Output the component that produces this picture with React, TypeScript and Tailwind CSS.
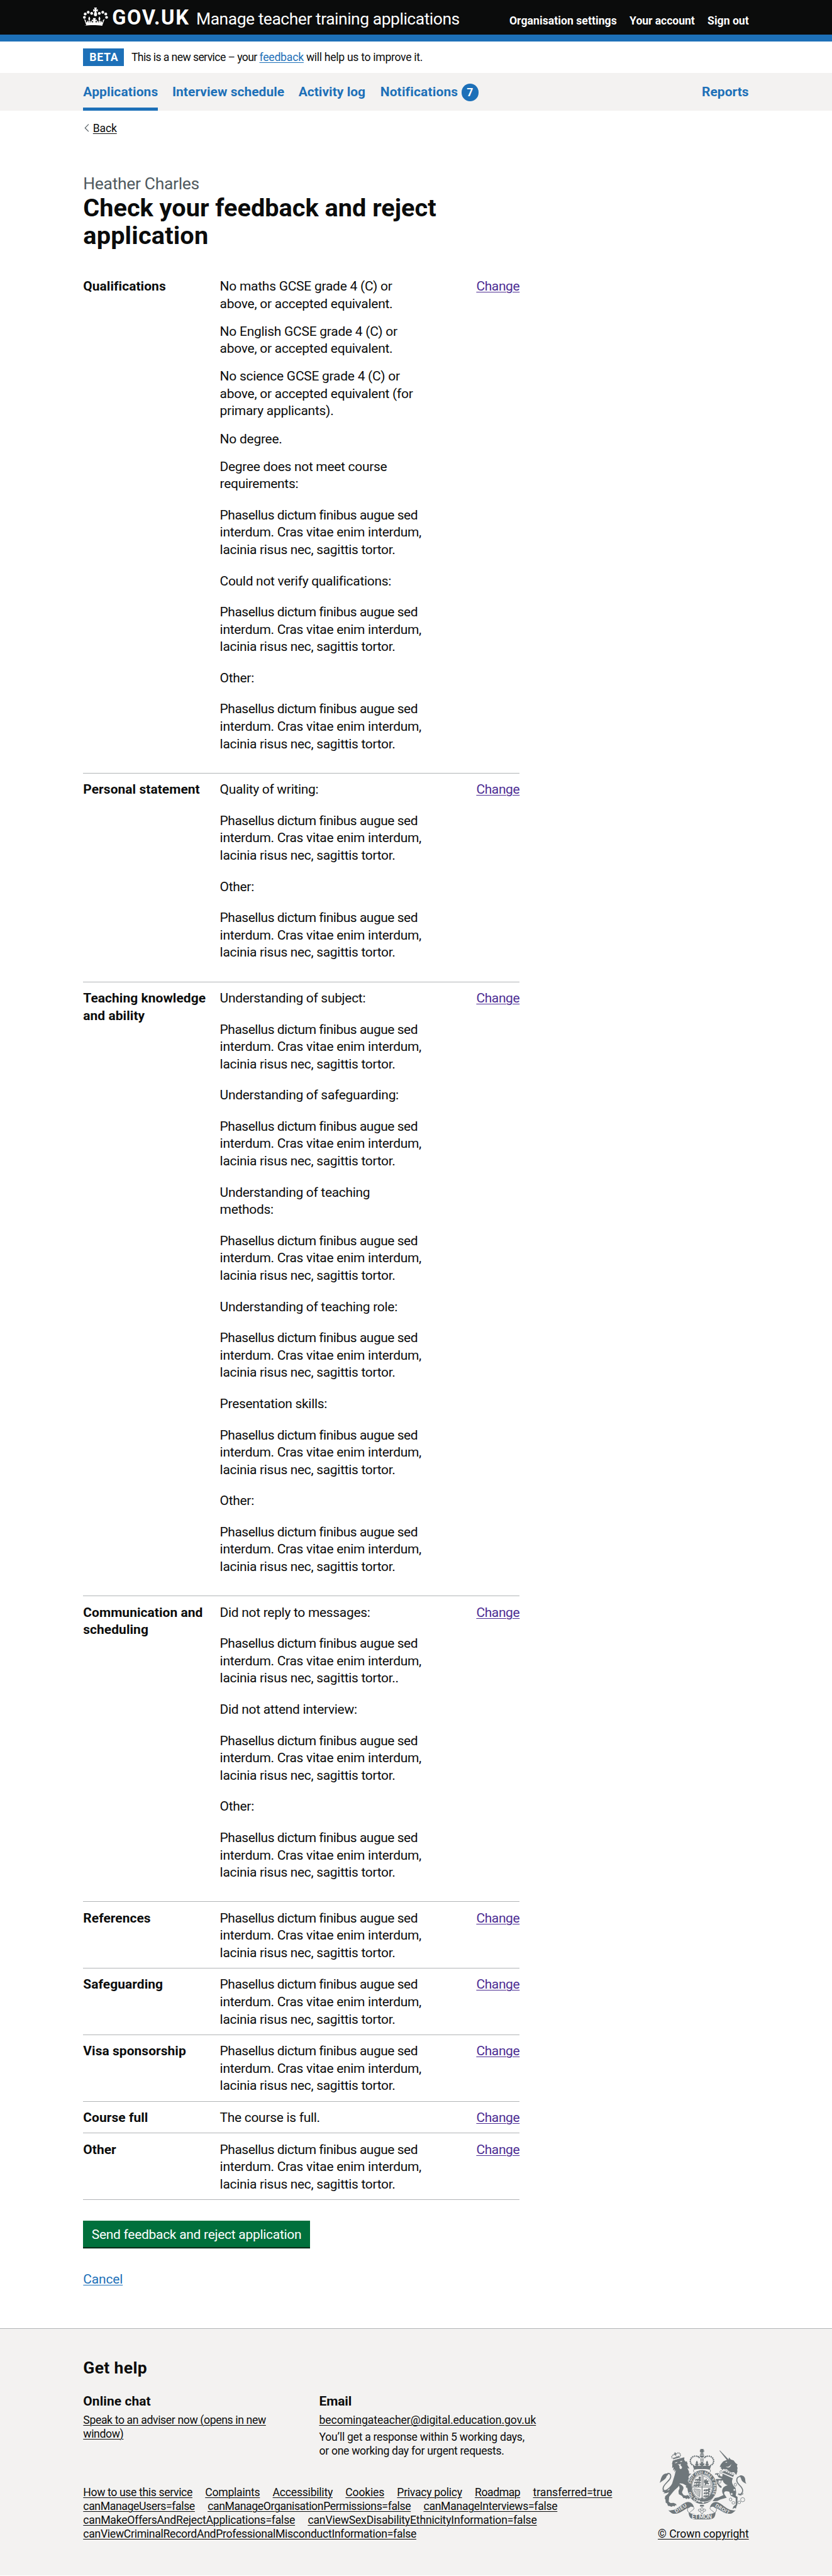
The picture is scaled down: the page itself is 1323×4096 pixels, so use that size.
import type { ReactNode } from "react";

type TextLine = [text: string, tracking: string];
type Block = { lines: TextLine[]; spacing: string };
type Row = { title: string[]; blocks: Block[] };

const REG = "tracking-[-0.0135em]";

const item = (...lines: string[]): Block => ({
  lines: lines.map((l): TextLine => [l, "tracking-[-0.0112em]"]),
  spacing: "mb-[16.5375px]",
});
const label = (...lines: string[]): Block => ({
  lines: lines.map((l): TextLine => [l, REG]),
  spacing: "mb-[22.05px]",
});
const lorem = (spacing = "mb-[22.05px]", end = "."): Block => ({
  lines: [
    ["Phasellus dictum finibus augue sed", "tracking-[-0.0221em]"],
    ["interdum. Cras vitae enim interdum,", "tracking-[-0.0133em]"],
    ["lacinia risus nec, sagittis tortor" + end, "tracking-[-0.014em]"],
  ],
  spacing,
});
const single = (): Block => lorem("mb-0");

const rows: Row[] = [
  {
    title: ["Qualifications"],
    blocks: [
      item("No maths GCSE grade 4 (C) or", "above, or accepted equivalent."),
      item("No English GCSE grade 4 (C) or", "above, or accepted equivalent."),
      item("No science GCSE grade 4 (C) or", "above, or accepted equivalent (for", "primary applicants)."),
      item("No degree."),
      label("Degree does not meet course", "requirements:"),
      lorem(),
      label("Could not verify qualifications:"),
      lorem(),
      label("Other:"),
      lorem(),
    ],
  },
  {
    title: ["Personal statement"],
    blocks: [label("Quality of writing:"), lorem(), label("Other:"), lorem()],
  },
  {
    title: ["Teaching knowledge", "and ability"],
    blocks: [
      label("Understanding of subject:"),
      lorem(),
      label("Understanding of safeguarding:"),
      lorem(),
      label("Understanding of teaching", "methods:"),
      lorem(),
      label("Understanding of teaching role:"),
      lorem(),
      label("Presentation skills:"),
      lorem(),
      label("Other:"),
      lorem(),
    ],
  },
  {
    title: ["Communication and", "scheduling"],
    blocks: [
      label("Did not reply to messages:"),
      lorem("mb-[22.05px]", ".."),
      label("Did not attend interview:"),
      lorem(),
      label("Other:"),
      lorem(),
    ],
  },
  { title: ["References"], blocks: [single()] },
  { title: ["Safeguarding"], blocks: [single()] },
  { title: ["Visa sponsorship"], blocks: [single()] },
  { title: ["Course full"], blocks: [{ lines: [["The course is full.", REG]], spacing: "mb-0" }] },
  { title: ["Other"], blocks: [single()] },
];

const footerLinks: TextLine[][] = [
  [
    ["How to use this service", "tracking-[-0.0206em]"],
    ["Complaints", "tracking-[-0.0144em]"],
    ["Accessibility", "tracking-[-0.0142em]"],
    ["Cookies", "tracking-[-0.0121em]"],
    ["Privacy policy", "tracking-[-0.0163em]"],
    ["Roadmap", "tracking-[-0.0256em]"],
    ["transferred=true", "tracking-[-0.0023em]"],
  ],
  [
    ["canManageUsers=false", "tracking-[-0.0216em]"],
    ["canManageOrganisationPermissions=false", "tracking-[-0.0217em]"],
    ["canManageInterviews=false", "tracking-[-0.0174em]"],
  ],
  [
    ["canMakeOffersAndRejectApplications=false", "tracking-[-0.0128em]"],
    ["canViewSexDisabilityEthnicityInformation=false", "tracking-[-0.0114em]"],
  ],
  [["canViewCriminalRecordAndProfessionalMisconductInformation=false", "tracking-[-0.017em]"]],
];

const UNDERLINE = "underline decoration-[1.1px] underline-offset-[1.5px]";

function Container({ children, className = "" }: { children: ReactNode; className?: string }) {
  return <div className={`mx-auto w-[1058.4px] ${className}`}>{children}</div>;
}

function CrownIcon() {
  return (
    <svg viewBox="0 0 216 159" className="h-[29.2px] w-[39.7px] shrink-0" fill="white" aria-hidden="true">
      <circle cx="12" cy="85" r="12" />
      <circle cx="19" cy="56" r="12" />
      <circle cx="45" cy="41" r="12" />
      <circle cx="75" cy="50" r="12" />
      <circle cx="141" cy="50" r="12" />
      <circle cx="171" cy="41" r="12" />
      <circle cx="197" cy="56" r="12" />
      <circle cx="204" cy="85" r="12" />
      <path d="M96 0h24l-6 19 14-5v21l-14-5c1 9 8 20 8 31 0 9-6 14-14 14s-14-5-14-14c0-11 7-22 8-31l-14 5V14l14 5z" />
      <path d="M30 158 9 100l15 9 2 20c8-1 14-9 10-14 10-3 12 8 8 13h6c-2-10-1-15 3-16-8-10-11-17 1-36 12 19 9 26 1 36 4 1 5 6 3 16h8c-5-6-1-15 8-13-4 8 3 15 14 13l0-12-11 5v-18l13 5-5-17h26l-5 17 13-5v18l-11-5v12c11 2 18-5 14-13 9-2 13 7 8 13h8c-2-10-1-15 3-16-8-10-11-17 1-36 12 19 9 26 1 36 4 1 5 6 3 16h6c-4-5-2-16 8-13-4 5 2 13 10 14l2-20 15-9-21 58c-48-7-108-7-156 0z" />
    </svg>
  );
}

function RibbonHalf() {
  return (
    <g>
      <path d="M206 608c28 5 54-2 79-18 35-24 62-52 93-53 26 0 47 22 52 52-12-16-34-15-40-4-36 3-80 56-130 54-22 0-36-15-54-31z" />
      <path d="M392 578c-28 12-24 38-4 52M430 588c-2 20-28 24-40 44" fill="none" stroke="#6f777b" strokeWidth="5" />
    </g>
  );
}

function CrownHalf() {
  const beads = [
    [474, 152], [466, 144], [452, 140], [434, 140], [418, 146], [406, 157], [399, 170], [397, 185], [401, 200], [409, 212],
  ];
  return (
    <g>
      {beads.map(([x, y]) => (
        <circle key={`${x}-${y}`} cx={x} cy={y} r="6.5" />
      ))}
      <path d="M454 178c12 16 10 22 3 30 8-3 13-2 13 4-4 0-6 4-4 12h-24c2-8 0-12-4-12 0-6 5-7 13-4-7-8-9-14 3-30z" />
      <path d="M414 208l12 8 6 8h66v28c-30-2-52 0-68 4z" />
      <path d="M498 249c-34-1-58 2-70 8-6 8-4 17 4 24" fill="none" stroke="#6f777b" strokeWidth="5" />
    </g>
  );
}

function Beast({ x, y }: { x: number; y: number }) {
  return (
    <path
      transform={`translate(${x} ${y})`}
      d="M0 12l8-8 6 4 8-4 14 2 6-8 6 2-3 9 5 4-3 12h-6l-2-7-12 1-4 7h-6l2-8-6-2-6 6-6-2z"
    />
  );
}

const lionCrownBeads = [
  [238, 154], [237, 142], [245, 132], [256, 127], [277, 120], [288, 113], [300, 113], [309, 121], [312, 133],
];

function RoyalArms() {
  return (
    <svg viewBox="132 78 750 612" className="h-[112.5px] w-[137.8px]" fill="#6f777b" aria-hidden="true">
      {/* lion */}
      <path d="M237 213l8-33 20-8 72-20 9 0 -2 20 12 16 10-4 10 28-9-4 15 26 8 14-18-4 14 30 0 18c6 0 14-2 20 0l-16 14-10 16 18 32 12 32 2 30-10 14 -12-4-4 8-8-14-10 4-2-18-12-4 10-6-28-16c-12-4-26-6-34-2 20 12 34 20 36 34 0 22-14 28-12 46l14 20 22 4 6-6 14 4 12 10 4 18-8-4-8 8-8-8-12 8-10-10-14 2-14-20-26-14-4-28 10-22-4-24c-10 14-32 30-50 50l-36 46-4 42 16 12 26-2 22 10 4 14-10-4-8 12-12-6-14 8-16-6-14-2-8-20-12-8-2-26-6-8 4-22 26-22 12-46 22-42 22-72 10-44-14 18 4-26-14 14 4-32-12 10 2-38z" />
      <path d="M262 198l24-8c-2 10-16 14-24 8zM306 186l22-6c-2 10-14 14-22 6zM284 208c10 6 24 4 32-2l-4 14 12 12c4 10-2 20-10 20s-14-10-10-20l-4-12z" fill="#f3f2f1" />
      <path d="M248 168l62-18 0-12-8 8-6-12-6 12-12-8-2 14-8-8-4 12-10-8-2 12-10-4z" />
      {lionCrownBeads.map(([x, y]) => (
        <circle key={`${x}-${y}`} cx={x} cy={y} r="4.6" />
      ))}
      <path d="M260 108h9l2 7 8-1 1 8-8 1 3 12-8 2-4-12-7 2-2-8 7-2z" />
      <path d="M238 176l76-22" stroke="#f3f2f1" strokeWidth="4" />
      <path d="M198 290c32-6 40 28 14 58-24 28-62 58-48 84 16 20 52-12 72-38" fill="none" stroke="#6f777b" strokeWidth="9" />
      <path d="M132 372c12-30 14-78 54-82 24-2 26 10 6 22-2 24-24 32-60 60zM148 430c28 12 54 14 82-6-8 24-32 42-66 37l12-8-22-6 10-6z" />
      <path d="M286 420c14 24 10 50-4 66-6-22-10-46 4-66z" fill="#f3f2f1" />

      {/* unicorn */}
      <path d="M648 92l6 0 72 74-12 8zM662 210l20-24 22-10 24-8 4-17 16 18 24 8 16 22 18 14-6 12 6 18-3 16 2 14-10 30-20-24-26 0-22-12-14-14c-10 2-20 0-30-2l-8 10-8-12-8-6 8-8-16-2z" />
      <path d="M704 232c20 4 38-6 46-24-2 24-22 40-46 24zM700 194c6-6 12-6 18-2l-10 6z" fill="#f3f2f1" />
      <path d="M690 254l92 44-10 26-92-38z" fill="#f3f2f1" />
      <path d="M688 264l8 10 6-8 6 16 10-12 6 20 12-12 4 20 14-10 0 16 16-6 4 4-6 20-92-38z" />
      <path d="M690 254l92 44" stroke="#6f777b" strokeWidth="3" />
      <path d="M682 286l92 40" stroke="#f3f2f1" strokeWidth="4" />
      <path d="M676 292l90 40c-18 30-4 58 22 82l6 38-4 30 16 12-2 64-8 18-4 18-12-6-18 10 8-22 20-16 0-56-44-22-12-34c-26-8-52-4-42 22l20 30-54 14-26 14-28 2-14 0 20-28 32-6 42-20c-20-30-14-66 22-80l14-4c-26-10-40-26-42-44l-22 8-18-6-4 18 18 22 16 12-2 14-14-6-10-12-16-24-6-24-12-2 14-10 30 0 22-4-32-10-16-26-16 2 2-10 24-2 24 26 14 2z" />
      <path d="M832 470c36-28 12-58-12-82-32-32-26-70 10-72" fill="none" stroke="#6f777b" strokeWidth="9" />
      <path d="M882 378c-18-4-44-24-44-40-12-20-6-30-20-30 32-8 52 8 54 32 2 16 0 22 10 38zM858 456c-10 14-34 16-48 2l6 12-10 0c12 8 20 10 34 10l-2-8 14 0z" />
      <g fill="#f3f2f1" stroke="#6f777b" strokeWidth="4.5">
        <ellipse cx="663" cy="277" rx="10" ry="12" />
        <ellipse cx="643" cy="301" rx="8" ry="10" />
        <ellipse cx="652" cy="360" rx="11" ry="14" />
        <ellipse cx="787" cy="387" rx="10" ry="13" />
        <circle cx="778" cy="432" r="10" />
        <circle cx="755" cy="468" r="10" />
        <ellipse cx="746" cy="515" rx="11" ry="13" />
        <ellipse cx="770" cy="544" rx="13" ry="11" />
        <ellipse cx="820" cy="540" rx="13" ry="11" />
        <circle cx="850" cy="517" r="18" />
      </g>

      {/* garter and shield */}
      <ellipse cx="499" cy="408" rx="132" ry="150" fill="#f3f2f1" />
      <ellipse cx="499" cy="408" rx="127" ry="146" />
      <ellipse cx="499" cy="404" rx="92" ry="108" fill="#f3f2f1" />
      <ellipse cx="499" cy="404" rx="87" ry="103" fill="none" stroke="#6f777b" strokeWidth="4" />
      <path d="M499 302v208M412 407h174" stroke="#6f777b" strokeWidth="6" />
      <Beast x={438} y={332} />
      <Beast x={430} y={356} />
      <Beast x={424} y={380} />
      <path d="M470 318h18v18h-18zM472 340h17v14h-17zM472 364h17v12h-17zM470 384h18v12h-18z" />
      <path d="M510 312v84h66c-4-40-24-68-66-84z" fill="none" stroke="#6f777b" strokeWidth="4" />
      <path d="M518 340l10 8 4-12 8 4-2 14 12-6 6 8-8 14 12 4-4 12-18-6-8 12-10-2 4-16-10-6z" />
      <Beast x={512} y={422} />
      <Beast x={512} y={448} />
      <Beast x={510} y={474} />
      <path d="M552 418h20l-2 16h-18zM552 440h18l-4 14h-14zM550 462h12l-8 14z" />
      <path d="M428 422l54 8-4 60c-26-8-46-36-50-68zM440 428l36 46M452 428l26 34M464 430l14 18M432 436l42 48" fill="none" stroke="#6f777b" strokeWidth="4.5" />
      <path d="M486 512l4-12h18l4 12z" />
      <path d="M604 486c-26 62-134 66-178 16" fill="none" stroke="#f3f2f1" strokeWidth="5" />
      <ellipse cx="444" cy="515" rx="15" ry="19" fill="none" stroke="#f3f2f1" strokeWidth="5" />
      <circle cx="473" cy="530" r="8" fill="#f3f2f1" />
      <circle cx="508" cy="541" r="8" fill="#f3f2f1" />
      <path id="garter" d="M424 491A101 118 0 1 1 578 482" fill="none" />
      <text fill="#f3f2f1" className="font-[Lato,sans-serif] text-[32px] font-bold">
        <textPath href="#garter" startOffset="0" textLength="50">HO</textPath>
      </text>
      <text fill="#f3f2f1" className="font-[Lato,sans-serif] text-[32px] font-bold">
        <textPath href="#garter" startOffset="116" textLength="376">SOIT QUI MAL Y PENSE</textPath>
      </text>
      <path d="M350 332l26 26 16 28 14 14 6 28-12 10-8-10-12 4-8-18-14-2 10-14-20-26z" />

      {/* crown */}
      <CrownHalf />
      <g transform="translate(996 0) scale(-1 1)">
        <CrownHalf />
      </g>
      <path d="M482 78h32l-8 12 10-6v22l-10-6 6 12h-28l6-12-10 6V84l10 6zM480 128c2-10 8-14 18-14s16 4 18 14zM478 133h40c-2 12-10 20-20 20s-18-8-20-20zM486 158h8v28h-8zM502 158h8v28h-8zM484 190h28l-8 14 14-4v20l-10-4v10h-20v-10l-10 4v-20l14 4z" />

      {/* motto ribbon */}
      <RibbonHalf />
      <g transform="translate(996 0) scale(-1 1)">
        <RibbonHalf />
      </g>
      <path d="M382 626c24 16 64 20 116 20s96-4 118-22c-2 34-10 54-34 60-36 8-130 8-164 0-24-6-34-28-36-58z" />
      <g fill="#f3f2f1" className="font-[Lato,sans-serif] font-bold">
        <text x="410" y="681" textLength="174" className="text-[46px]">ET MON</text>
        <text transform="translate(274 633) rotate(-32)" textLength="112" className="text-[42px]">DIEU</text>
        <text transform="translate(610 574) rotate(31)" textLength="134" className="text-[40px]">DROIT</text>
      </g>
      <path d="M481 562h34v14h-34z" />
      <path d="M498 580c14 16 10 26 4 34 4-16 24-22 28-8 0 12-12 16-16 8-2 10-8 14-10 22h-12c-2-8-8-12-10-22-4 8-16 4-16-8 4-14 24-8 28 8-6-8-10-18 4-34z" fill="none" stroke="#6f777b" strokeWidth="5" />
    </svg>
  );
}

function SummaryRow({ row }: { row: Row }) {
  return (
    <div className="flex border-b-[1.1025px] border-[#b1b4b6] pb-[9.75px] pt-[12.3px] text-[20.95px] leading-[27.5625px]">
      <dt className="w-[217.3px] shrink-0 whitespace-nowrap font-bold tracking-[0.003em]">
        {row.title.map((t) => (
          <div key={t}>{t}</div>
        ))}
      </dt>
      <dd className="grow">
        {row.blocks.map((block, i) => (
          <p key={i} className={block.spacing}>
            {block.lines.map(([text, tracking]) => (
              <span key={text} className={`block whitespace-nowrap ${tracking}`}>
                {text}
              </span>
            ))}
          </p>
        ))}
      </dd>
      <dd className="shrink-0">
        <a className={`tracking-[-0.0164em] text-[#4c2c92] ${UNDERLINE}`}>Change</a>
      </dd>
    </div>
  );
}

export default function App() {
  return (
    <div className="min-h-[4096px] w-full overflow-hidden bg-white font-[Roboto,sans-serif] text-[17.64px] leading-[22.05px] text-[#0b0c0c]">
      <header className="border-b-[11.025px] border-[#1d70b8] bg-[#0b0c0c] text-white">
        <Container className="flex h-[55.125px] items-start whitespace-nowrap">
          <div className="mt-[11.5px]">
            <CrownIcon />
          </div>
          <span className="ml-[6.3px] mt-[11.5px] text-[32.6px] font-bold leading-[33px] tracking-[0.048em]">GOV.UK</span>
          <span className="ml-[10.6px] mt-[13px] text-[26.46px] leading-[33.075px] tracking-[-0.0177em]">
            Manage teacher training applications
          </span>
          <nav className="ml-auto mt-[21.5px] flex gap-[20.3px] font-bold">
            <a className="tracking-[0.0025em]">Organisation settings</a>
            <a className="tracking-[-0.0039em]">Your account</a>
            <a>Sign out</a>
          </nav>
        </Container>
      </header>

      <Container className="flex h-[49.61px] items-center whitespace-nowrap">
        <strong className="flex h-[27.56px] w-[64.8px] items-center justify-center bg-[#1d70b8] pl-[1px] font-bold tracking-[0.04em] text-white">
          BETA
        </strong>
        <p className="ml-[11.8px]">
          <span className="tracking-[-0.034em]">This is a new service – your </span>
          <a className={`tracking-[-0.0131em] text-[#1d70b8] ${UNDERLINE}`}>feedback</a>
          <span className="tracking-[-0.0174em]"> will help us to improve it.</span>
        </p>
      </Container>

      <nav className="bg-[#f3f2f1]">
        <Container className="flex h-[60.64px] whitespace-nowrap text-[20.95px] font-bold leading-[60.64px] text-[#1d70b8]">
          <a className="mr-[22.5px] border-b-[5.5px] border-[#1d70b8] tracking-[0.0066em]">Applications</a>
          <a className="mr-[22.5px] tracking-[0.0029em]">Interview schedule</a>
          <a className="mr-[23.6px] tracking-[0.002em]">Activity log</a>
          <a className="flex items-center tracking-[0.0082em]">
            Notifications
            <span className="ml-[5.5px] mt-[2px] flex size-[27.56px] items-center justify-center rounded-full bg-[#1d70b8] pt-[1px] text-[17.64px] leading-none text-white">
              7
            </span>
          </a>
          <a className="ml-auto tracking-[0.0021em]">Reports</a>
        </Container>
      </nav>

      <Container className="pt-[16.54px]">
        <a className="flex w-fit items-center">
          <svg viewBox="0 0 8 13" className="ml-[1.5px] h-[13px] w-[8px]" fill="none" stroke="#505a5f" strokeWidth="1.2" aria-hidden="true">
            <path d="M6.9.7 1.3 6.4l5.6 5.7" />
          </svg>
          <span className={`ml-[6px] tracking-[-0.0121em] ${UNDERLINE}`}>Back</span>
        </a>

        <main className="w-[694px] pt-[60.2px]">
          <h1 className="whitespace-nowrap text-[39.69px] font-bold leading-[44.1px]">
            <span className="mb-[0.6px] block text-[26.46px] font-normal leading-[33.075px] tracking-[-0.012em] text-[#505a5f]">Heather Charles</span>
            <span className="block">Check your feedback and reject</span>
            <span className="block tracking-[0.0039em]">application</span>
          </h1>

          <dl className="mt-[32.7px]">
            {rows.map((row) => (
              <SummaryRow key={row.title[0]} row={row} />
            ))}
          </dl>

          <button className="mt-[33.075px] block h-[41.9px] w-[360.5px] whitespace-nowrap bg-[#00703c] pt-[1.9px] text-center text-[20.95px] leading-[40px] tracking-[-0.0126em] text-white shadow-[0_2.2px_0_#002d18]">
            Send feedback and reject application
          </button>
          <a className={`mt-[37.6px] block w-fit text-[20.95px] leading-[27.5625px] tracking-[-0.0071em] text-[#1d70b8] ${UNDERLINE}`}>
            Cancel
          </a>
        </main>
      </Container>

      <footer className="mt-[63.8px] h-[393px] border-t-[1.1025px] border-[#b1b4b6] bg-[#f3f2f1] pt-[45.1px]">
        <Container>
          <h2 className="text-[26.46px] font-bold leading-[33.075px] tracking-[0.0136em]">Get help</h2>
          <div className="mt-[23.7px] flex h-[147.6px]">
            <section className="w-[375.2px]">
              <h3 className="text-[20.95px] font-bold leading-[27.5625px] tracking-[0.0046em]">Online chat</h3>
              <p className={`mt-[4.3px] w-[310px] whitespace-nowrap tracking-[-0.0208em] ${UNDERLINE}`}>
                Speak to an adviser now (opens in new
                <br />
                window)
              </p>
            </section>
            <section className="whitespace-nowrap">
              <h3 className="text-[20.95px] font-bold leading-[27.5625px] tracking-[-0.0037em]">Email</h3>
              <p className={`mt-[4.3px] tracking-[-0.0044em] ${UNDERLINE}`}>becomingateacher@digital.education.gov.uk</p>
              <p className="mt-[5.5px]">
                <span className="block tracking-[-0.0164em]">You’ll get a response within 5 working days,</span>
                <span className="block tracking-[-0.018em]">or one working day for urgent requests.</span>
              </p>
            </section>
          </div>
          <div className="flex items-start justify-between">
            <ul>
              {footerLinks.map((line, i) => (
                <li key={i} className="flex gap-[20.3px] whitespace-nowrap">
                  {line.map(([text, tracking]) => (
                    <a key={text} className={`${tracking} ${UNDERLINE}`}>
                      {text}
                    </a>
                  ))}
                </li>
              ))}
            </ul>
            <div className="-mt-[58.8px] flex flex-col items-center">
              <RoyalArms />
              <a className={`mt-[12.2px] whitespace-nowrap tracking-[-0.0045em] ${UNDERLINE}`}>© Crown copyright</a>
            </div>
          </div>
        </Container>
      </footer>
    </div>
  );
}
